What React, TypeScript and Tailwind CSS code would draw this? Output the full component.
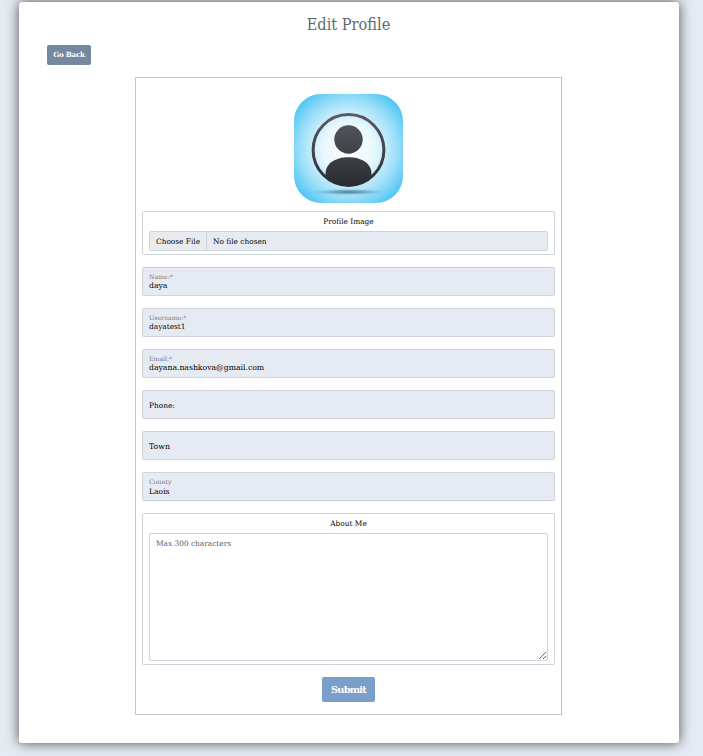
import React from 'react';

function Avatar() {
  return (
    <svg className="block h-[109px] w-[109px]" viewBox="0 0 109 109" role="img">
      <defs>
        <radialGradient id="sky" cx="50%" cy="50%" r="66%">
          <stop offset="0" stopColor="#ffffff" />
          <stop offset="0.36" stopColor="#e9f8fe" />
          <stop offset="0.68" stopColor="#9bdef8" />
          <stop offset="0.9" stopColor="#54c7f3" />
          <stop offset="1" stopColor="#3fbff2" />
        </radialGradient>
        <linearGradient id="ink" gradientUnits="userSpaceOnUse" x1="0" y1="19" x2="0" y2="93">
          <stop offset="0" stopColor="#5b5c62" />
          <stop offset="0.5" stopColor="#414348" />
          <stop offset="1" stopColor="#282b2e" />
        </linearGradient>
        <radialGradient id="shade">
          <stop offset="0" stopColor="#244b5c" stopOpacity="0.7" />
          <stop offset="0.5" stopColor="#3b7085" stopOpacity="0.4" />
          <stop offset="1" stopColor="#4dc4f3" stopOpacity="0" />
        </radialGradient>
        <clipPath id="disc">
          <circle cx="54.5" cy="56" r="36" />
        </clipPath>
      </defs>
      <rect width="109" height="109" rx="27" fill="url(#sky)" />
      <ellipse cx="54.5" cy="98" rx="38" ry="3.5" fill="url(#shade)" />
      <circle cx="54.5" cy="56" r="35.4" fill="none" stroke="url(#ink)" strokeWidth="3" />
      <circle cx="54.5" cy="45.5" r="14.2" fill="url(#ink)" />
      <path
        clipPath="url(#disc)"
        d="M31.5 95V80C31.5 69 42 63.3 54.5 63.3S77.5 69 77.5 80V95Z"
        fill="url(#ink)"
      />
    </svg>
  );
}

type FieldProps = { label?: string; value: string; fieldClass?: string; valueClass?: string };

function Field({ label, value, fieldClass = 'pt-[4px]', valueClass = 'text-[7.4px]' }: FieldProps) {
  return (
    <div className={`flex h-[29px] flex-col rounded-[2px] border border-[#ced4da] bg-[#e6ebf3] px-[6px] ${fieldClass}`}>
      {label && (
        <span className="block h-[9px] whitespace-nowrap text-[6.2px] leading-[9px] text-[#72787f]">{label}</span>
      )}
      <span className={`block h-[9px] whitespace-nowrap leading-[9px] text-black ${valueClass}`}>{value}</span>
    </div>
  );
}

export default function App() {
  return (
    <div className="h-[756px] overflow-hidden bg-[#e6ebf3] pt-[2px] pl-[19px] font-['Roboto_Slab','DejaVu_Serif',serif] font-normal">
      <main className="flex h-[741px] w-[660px] flex-col items-center rounded-[3px] bg-white pr-px shadow-[0_0_13px_rgba(0,0,0,0.68)]">
        <h1 className="mt-[11px] h-[24px] whitespace-nowrap font-['Roboto_Slab','DejaVu_Serif_Condensed','DejaVu_Serif',serif] text-[16.2px] leading-[24px] text-[#5f6870] [font-stretch:condensed]">
          Edit Profile
        </h1>
        <button className="mt-[8px] ml-[28px] h-[20px] w-[44px] self-start rounded-[2px] bg-[#74889f] whitespace-nowrap text-[7.2px] font-bold leading-[20px] tracking-[-0.27px] text-white">
          Go Back
        </button>
        <form className="mt-[12px] flex h-[638px] w-[427px] flex-col items-center border border-[#c5c6c8] px-[6px] pt-[16px]">
          <Avatar />
          <section className="mt-[8px] h-[44px] w-full rounded-[2px] border border-[#ced4da] px-[6px] text-[7.4px] text-black">
            <h2 className="mt-[4px] h-[11px] text-center leading-[11px]">Profile Image</h2>
            <div className="mt-[4px] flex h-[20px] rounded-[2px] border border-[#ced4da] bg-[#e6ebf3] leading-[19px]">
              <span className="w-[57px] border-r border-[#ced4da] bg-[#e9ecef] pl-[6px] whitespace-nowrap">Choose File</span>
              <span className="pl-[6px] whitespace-nowrap">No file chosen</span>
            </div>
          </section>
          <div className="mt-[12px] flex w-full flex-col gap-[12px]">
            <Field label="Name:*" value="daya" valueClass="text-[7.7px]" />
            <Field label="Username:*" value="dayatest1" />
            <Field label="Email:*" value="dayana.nashkova@gmail.com" valueClass="text-[7.7px]" />
            <Field value="Phone:" fieldClass="pt-[10px]" />
            <Field value="Town" fieldClass="pt-[10px]" valueClass="text-[7.8px]" />
            <Field label="County" value="Laois" valueClass="text-[7.6px] mt-px" />
          </div>
          <section className="mt-[12px] h-[152px] w-full rounded-[2px] border border-[#ced4da] px-[6px] text-[7.4px] text-black">
            <h2 className="mt-[4px] h-[11px] text-center leading-[11px]">About Me</h2>
            <textarea
              className="mt-[4px] block h-[128px] w-full rounded-[2px] border border-[#ced4da] bg-white px-[6px] py-[4px] leading-[11px] placeholder:text-[#565e65]"
              placeholder="Max 300 characters"
            />
          </section>
          <button type="button" className="mt-[12px] h-[25px] w-[53px] rounded-[2px] bg-[#7b9fcb] whitespace-nowrap text-[9.8px] font-bold leading-[25px] tracking-[-0.8px] text-white">
            Submit
          </button>
        </form>
      </main>
    </div>
  );
}
